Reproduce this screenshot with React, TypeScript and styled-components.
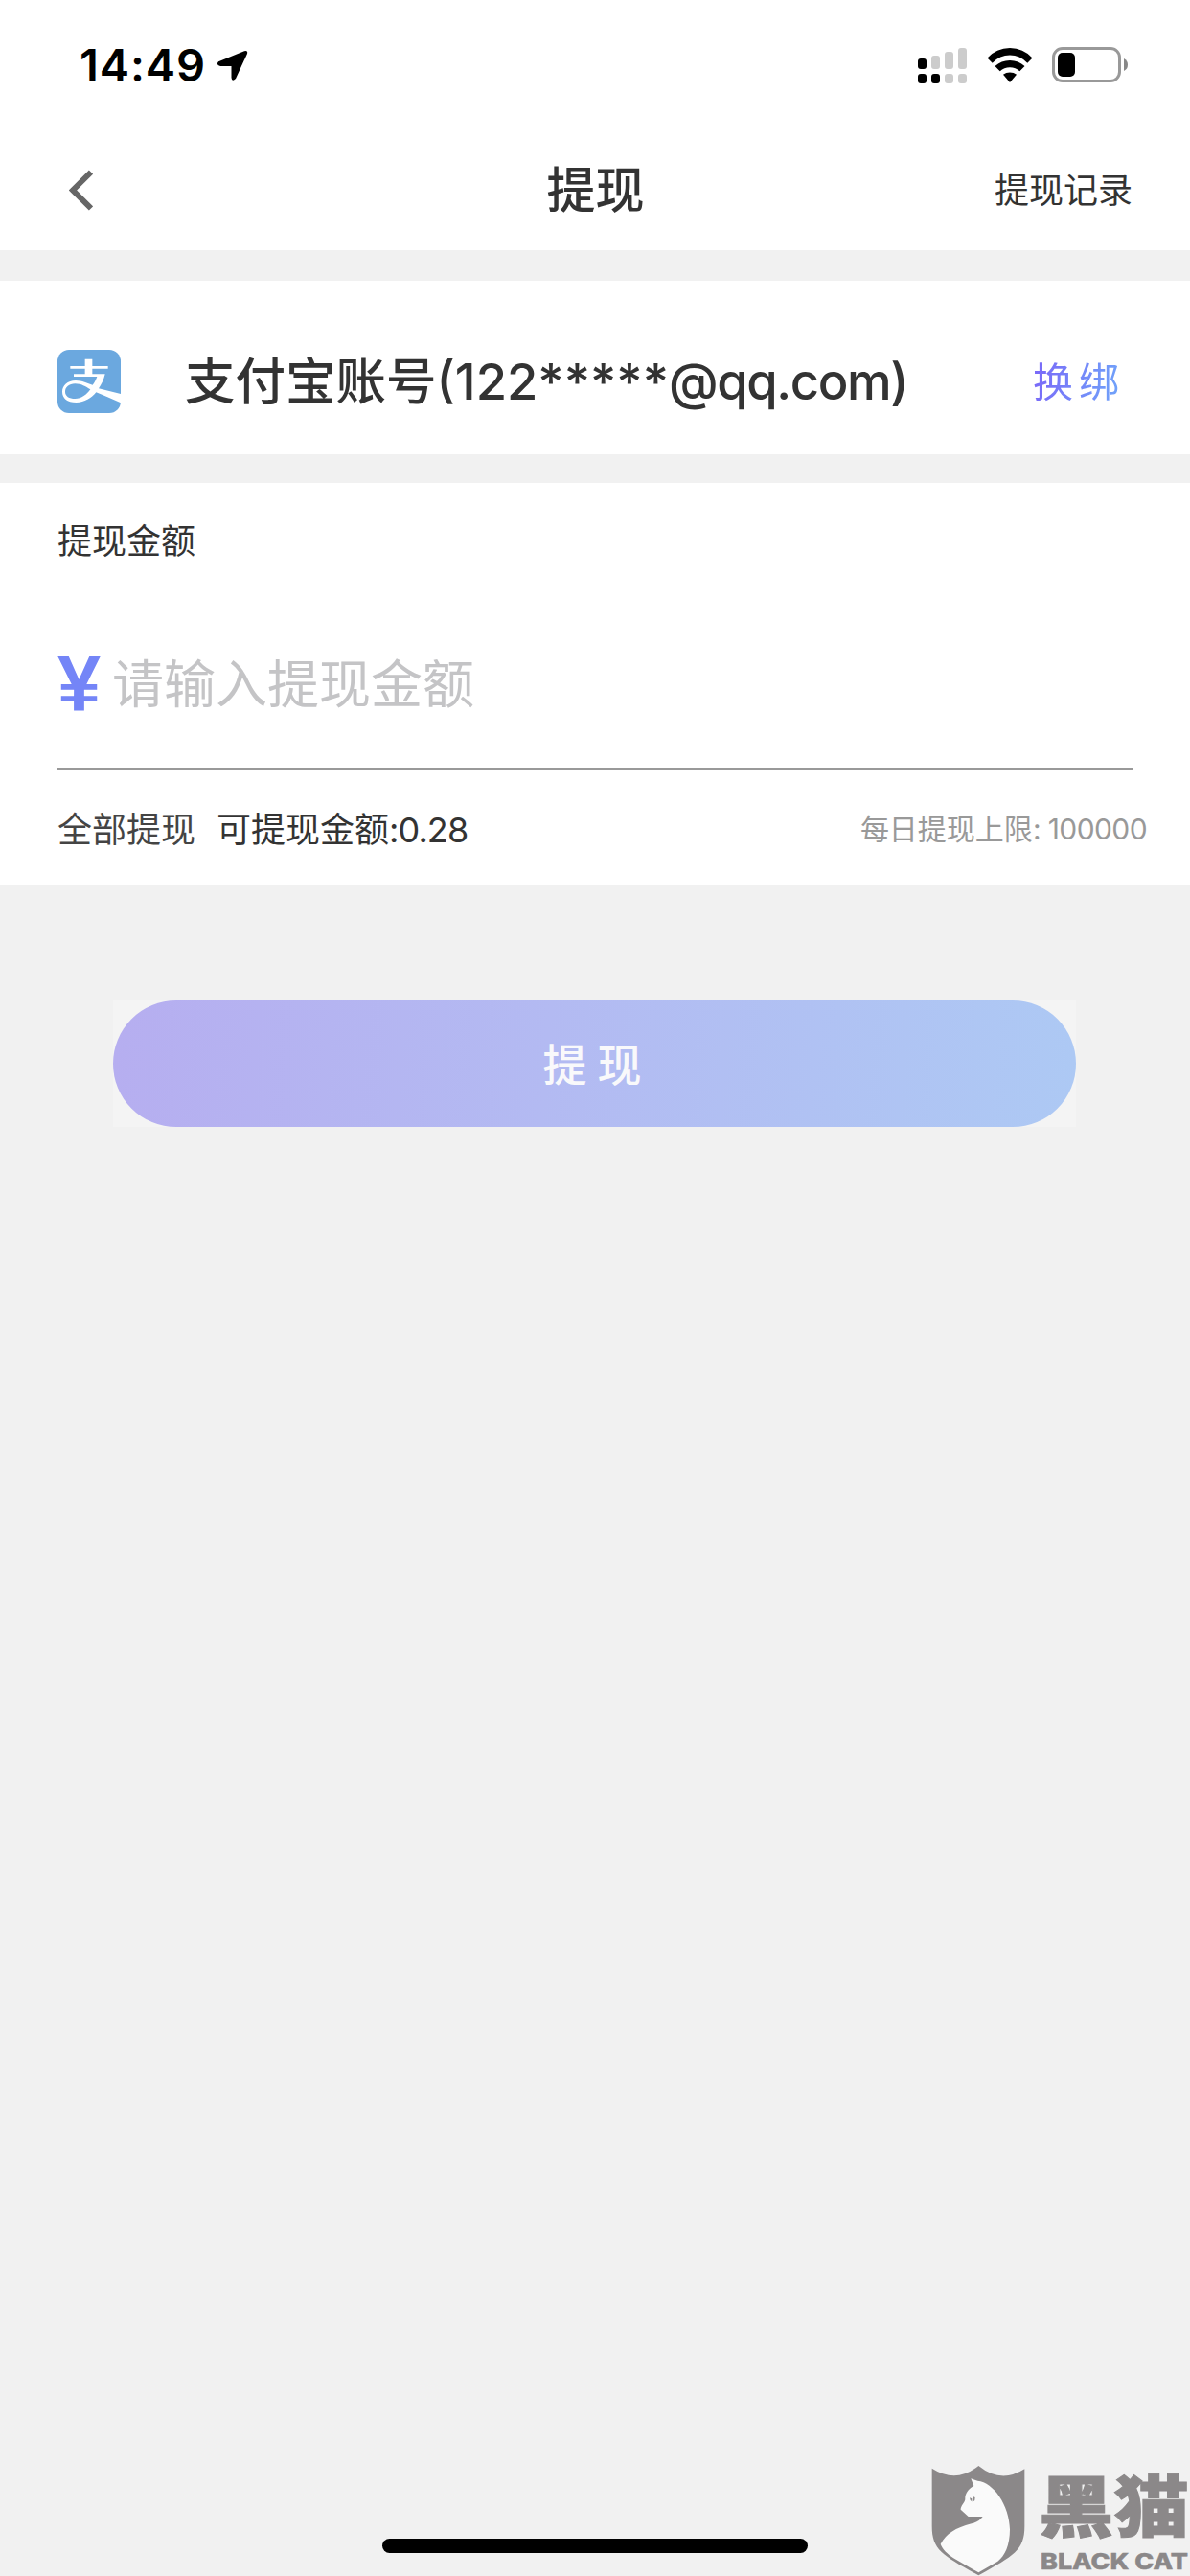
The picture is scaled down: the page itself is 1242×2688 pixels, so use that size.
import React from "react";
import styled, { createGlobalStyle } from "styled-components";

const GlobalStyle = createGlobalStyle`
  * { box-sizing: border-box; }
  body {
    margin: 0;
    background: #f1f1f1;
    font-family: Inter, "Noto Sans CJK SC", sans-serif;
    color: #333;
  }
`;

const Screen = styled.div`
  position: relative;
  display: flex;
  flex-direction: column;
  width: 1242px;
  height: 2688px;
  overflow: hidden;
  background: #f1f1f1;
`;

const StatusBar = styled.div`
  display: flex;
  align-items: center;
  height: 136px;
  padding: 0 64px 0 83px;
  background: #fff;
`;

const Time = styled.span`
  font-size: 47px;
  font-weight: 600;
  line-height: 60px;
  letter-spacing: 0.9px;
  color: #000;
`;

const LocationIcon = styled.svg`
  margin-left: 11px;
`;

const StatusIcons = styled.div`
  display: flex;
  align-items: center;
  gap: 20px;
  margin-left: auto;
`;

const NavBar = styled.header`
  display: grid;
  grid-template-columns: 1fr auto 1fr;
  align-items: center;
  height: 125px;
  padding: 0 60px 0 72px;
  background: #fff;
`;

const BackButton = styled.button`
  display: flex;
  padding: 0;
  border: 0;
  background: none;
`;

const Title = styled.h1`
  margin: 0;
  padding-right: 11px;
  font-size: 51px;
  font-weight: 500;
  line-height: 60px;
`;

const NavLink = styled.a`
  justify-self: end;
  font-size: 36px;
  line-height: 44px;
`;

const AccountRow = styled.section`
  display: flex;
  align-items: center;
  height: 181px;
  margin-top: 32px;
  padding: 29px 68px 0 60px;
  background: #fff;
`;

const AccountName = styled.span`
  margin-left: 67px;
  font-size: 52.5px;
  font-weight: 500;
  line-height: 64px;
  white-space: nowrap;
`;

const MailDomain = styled.span`
  letter-spacing: -1.4px;
`;

const Rebind = styled.a`
  margin-left: auto;
  padding-top: 2px;
  font-size: 42px;
  line-height: 56px;
  letter-spacing: 6px;
  color: transparent;
  background: linear-gradient(100deg, #7a66f8, #6fa8fa);
  background-clip: text;
  -webkit-background-clip: text;
`;

const AmountPanel = styled.section`
  display: flex;
  flex-direction: column;
  height: 420px;
  margin-top: 30px;
  padding: 39px 45px 0 60px;
  background: #fff;
`;

const Label = styled.label`
  font-size: 36px;
  line-height: 44px;
`;

const AmountField = styled.div`
  display: flex;
  align-items: center;
  height: 217px;
  margin-right: 15px;
  padding-top: 38px;
  border-bottom: 3px solid #999;
`;

const Currency = styled.span`
  width: 57px;
  font-family: "Liberation Sans", sans-serif;
  font-size: 81px;
  font-weight: 700;
  line-height: 80px;
  color: #7485f7;
`;

const AmountInput = styled.input`
  flex: 1;
  min-width: 0;
  height: 80px;
  padding: 2px 0 0;
  border: 0;
  outline: 0;
  background: none;
  font-family: inherit;
  font-size: 54px;
  &::placeholder { color: #c4c4c6; opacity: 1; }
`;

const Summary = styled.div`
  display: flex;
  align-items: center;
  height: 117px;
  font-size: 36px;
`;

const WithdrawAll = styled.a`
  margin-right: 22px;
  color: #444;
`;

const Balance = styled.span`
  letter-spacing: -0.9px;
`;

const Limit = styled.span`
  margin-left: auto;
  font-size: 30px;
  color: #999;
`;

const LimitValue = styled.span`
  letter-spacing: -0.6px;
`;

const ActionArea = styled.div`
  width: 1005px;
  margin: 120px 0 0 118px;
  background: #f4f4f4;
`;

const SubmitButton = styled.button`
  display: block;
  width: 100%;
  height: 132px;
  padding: 0 0 4px 6px;
  border: 0;
  border-radius: 66px;
  background: linear-gradient(95deg, #b6aef0, #b3baf2 45%, #adc9f4);
  font-family: inherit;
  font-size: 46px;
  font-weight: 500;
  letter-spacing: 11px;
  color: #f9f9fb;
`;

const HomeIndicator = styled.div`
  width: 444px;
  height: 15px;
  margin: auto auto 24px;
  border-radius: 8px;
  background: #000;
`;

const Watermark = styled.div`
  position: absolute;
  right: 0;
  bottom: 0;
  display: flex;
  width: 270px;
  height: 116px;
  color: #8b8889;
`;

const WatermarkWords = styled.svg`
  margin-left: 14px;
  overflow: visible;
`;

const Signal = () => (
  <svg width="52" height="38" viewBox="0 0 52 38">
    {[11, 14, 18, 22].map((h, i) => (
      <React.Fragment key={h}>
        <rect x={i * 14} y={23 - h} width="9" height={h} rx="3" fill={i < 1 ? "#000" : "#ccc"} />
        <rect x={i * 14} y="28" width="9" height="10" rx="3" fill={i < 2 ? "#000" : "#ccc"} />
      </React.Fragment>
    ))}
  </svg>
);

const Wifi = () => (
  <svg width="48" height="36" viewBox="0 0 48 36">
    <path d="M0.5 10.5Q10 0 24 0T47.500 10.500L42.300 15.700Q34.500 7.500 24 7.500T5.700 15.700Z" />
    <path d="M8.500 19Q15 13 24 13T39.500 19L34.300 24.300Q30 20.300 24 20.300T13.700 24.300Z" />
    <path d="M17 27.700Q20 25.500 24 25.500T31 27.700L24 36Z" />
  </svg>
);

const Battery = () => (
  <svg width="80" height="38" viewBox="0 0 80 38">
    <rect x="1.500" y="1.500" width="69" height="34" rx="9.500" fill="none" stroke="#999" strokeWidth="3" />
    <rect x="6" y="6" width="18" height="25" rx="5" />
    <path d="M75 12q4 2 4 6.500t-4 6.500z" fill="#888" />
  </svg>
);

const AlipayLogo = () => (
  <svg width="66" height="66" viewBox="0 0 198 198">
    <rect width="198" height="198" rx="36" fill="#6ba8df" />
    <path
      fill="#fff"
      d="M86 29h23v22h49v8h-49v17h40c-4 17-12 33-20 45l69 17v28c-25-11-50-22-77-33-15 18-36 32-62 32-29 0-44-14-44-34 0-19 16-35 42-35 21 0 36 9 53 14 7-9 11-18 14-26H51v-8h35V59H40v-8h46zM55 106c-19 0-31 11-31 25 0 14 12 22 31 22 21 0 36-13 48-29-15-9-28-18-48-18z"
    />
  </svg>
);

const Shield = () => (
  <svg width="98" height="116" viewBox="68 66 294 348">
    <path
      fill="#8b8889"
      d="M70 77Q146 126 216 69Q286 126 360 79V258C360 334 326 350 216 412C106 350 70 334 70 258Z"
    />
    <path
      fill="#fafafa"
      d="M192 109L213 116C263 121 312 192 314 268C314 318 298 352 276 368L216 403L140 359C118 346 102 328 97 314C117 280 142 264 194 250C210 246 222 238 229 228H184L160 206C159 195 173 184 174 174C173 158 182 142 201 132Z"
    />
    <path fill="#8b8889" d="M188 169l7 3v9q-7-4-7-12zM197 164l8 4-1 9q-4 5-8 4 8-7 1-17z" />
  </svg>
);

export default function App() {
  return (
    <>
      <GlobalStyle />
      <Screen>
        <StatusBar>
          <Time>14:49</Time>
          <LocationIcon width="33" height="33" viewBox="0 0 33 33">
            <path d="M2 12.300L29 1.200Q33 0 32 4L20 30Q16 34 15.500 29V17H4Q-1 15.500 2 12.300Z" />
          </LocationIcon>
          <StatusIcons>
            <Signal />
            <Wifi />
            <Battery />
          </StatusIcons>
        </StatusBar>
        <NavBar>
          <BackButton aria-label="返回">
            <svg width="25" height="43" viewBox="0 0 25 43">
              <path d="M23 2.500L4 21.500L23 40.500" fill="none" stroke="#666" strokeWidth="6" />
            </svg>
          </BackButton>
          <Title>提现</Title>
          <NavLink>提现记录</NavLink>
        </NavBar>
        <AccountRow>
          <AlipayLogo />
          <AccountName>
            支付宝账号(122*****<MailDomain>@qq.com)</MailDomain>
          </AccountName>
          <Rebind>换绑</Rebind>
        </AccountRow>
        <AmountPanel>
          <Label htmlFor="amount">提现金额</Label>
          <AmountField>
            <Currency>¥</Currency>
            <AmountInput id="amount" placeholder="请输入提现金额" />
          </AmountField>
          <Summary>
            <WithdrawAll>全部提现</WithdrawAll>
            <span>
              可提现金额<Balance>:0.28</Balance>
            </span>
            <Limit>
              每日提现上限<LimitValue>: 100000</LimitValue>
            </Limit>
          </Summary>
        </AmountPanel>
        <ActionArea>
          <SubmitButton>提现</SubmitButton>
        </ActionArea>
        <HomeIndicator />
        <Watermark>
          <Shield />
          <WatermarkWords width="158" height="116" viewBox="0 0 158 116" fill="currentColor" stroke="currentColor">
            <text x="0" y="70" fontFamily="Noto Sans CJK SC" fontSize="70" fontWeight="900" strokeWidth="1" textLength="157" lengthAdjust="spacingAndGlyphs">黑猫</text>
            <text x="2" y="109" fontFamily="Inter" fontSize="23" fontWeight="800" strokeWidth="0.500" textLength="154" lengthAdjust="spacingAndGlyphs">BLACK CAT</text>
          </WatermarkWords>
        </Watermark>
      </Screen>
    </>
  );
}
